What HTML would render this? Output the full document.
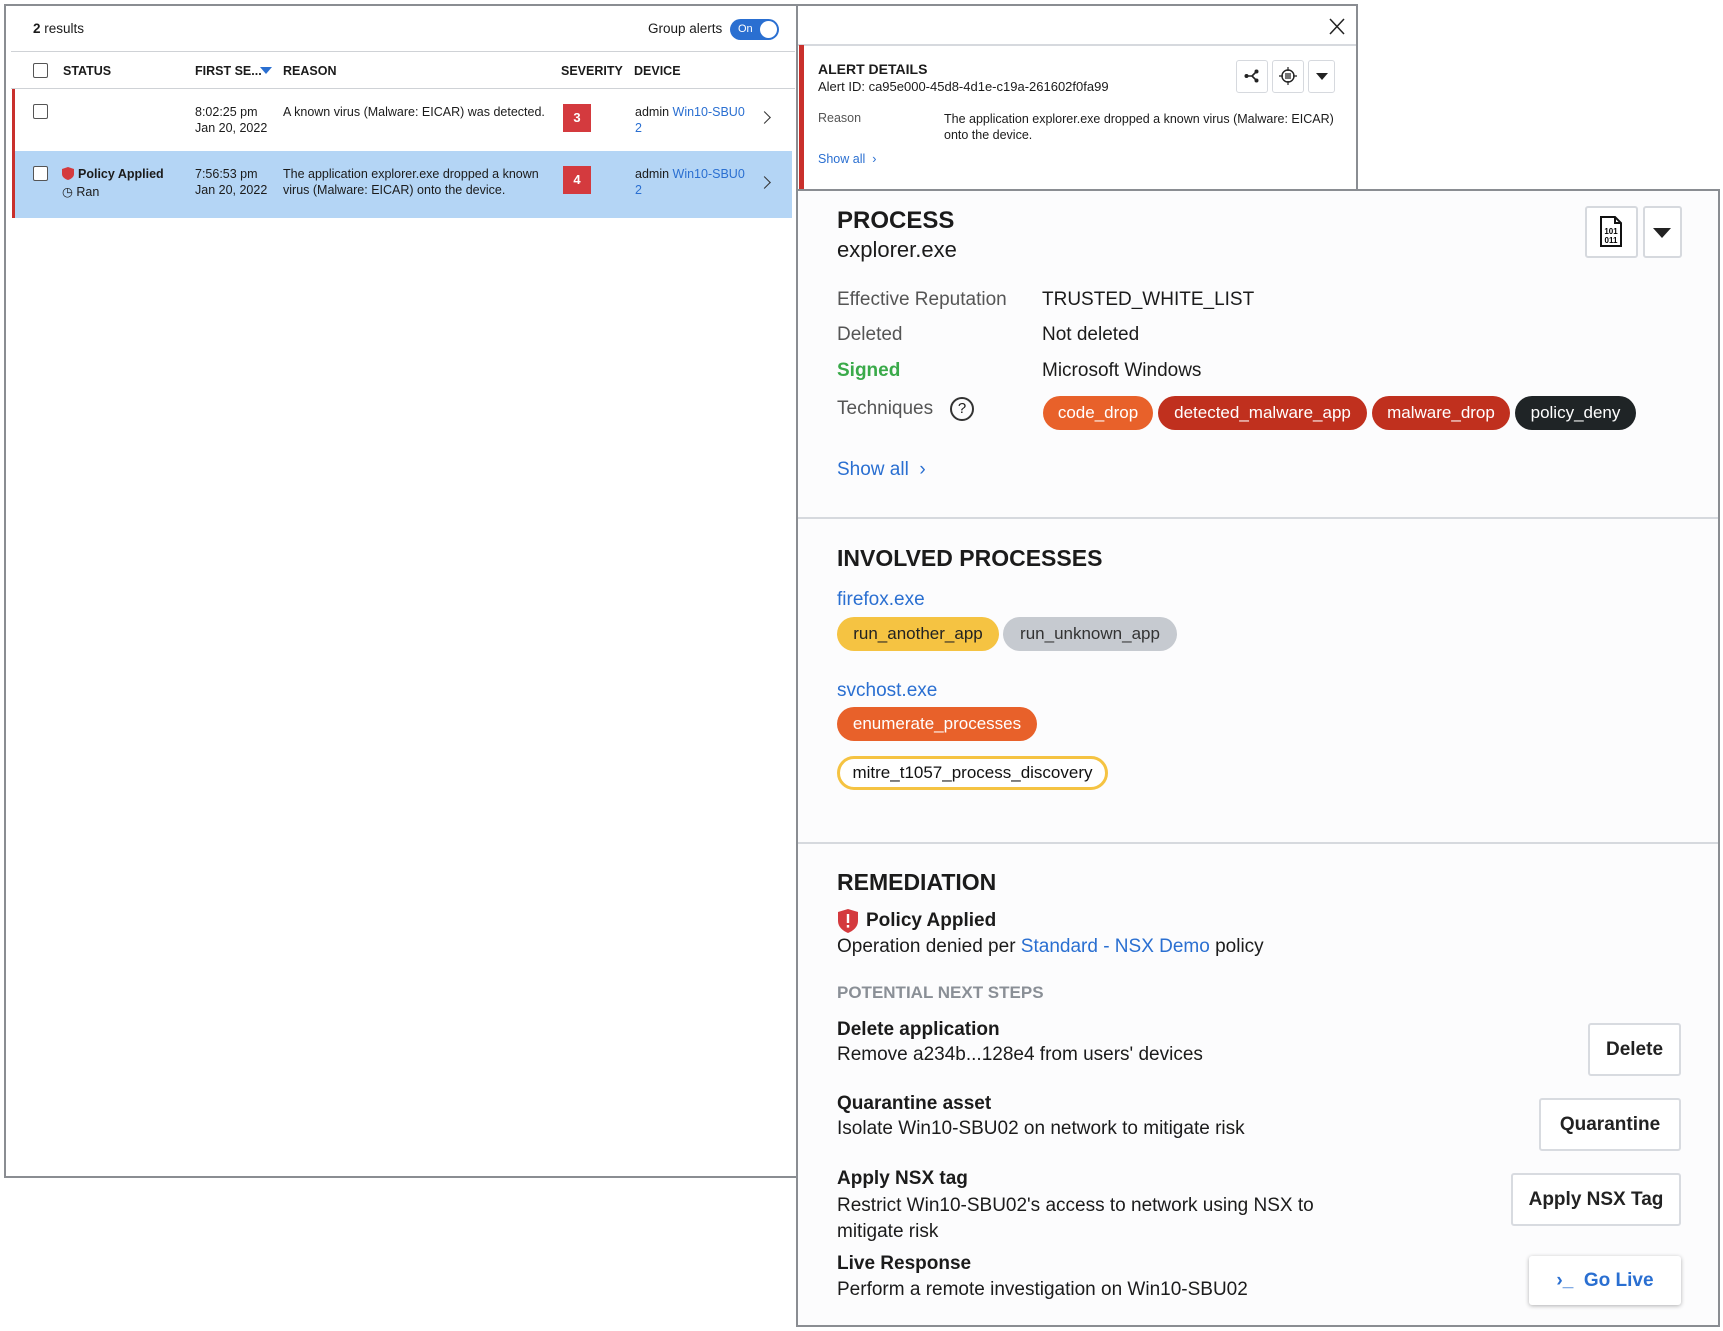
<!DOCTYPE html>
<html><head><meta charset="utf-8"><style>
*{margin:0;padding:0;box-sizing:border-box}
body{width:1723px;height:1331px;background:#fff;position:relative;overflow:hidden;font-family:"Liberation Sans",sans-serif;color:#1b1b1b}
.a{position:absolute;white-space:nowrap}
.s{font-size:12.5px;line-height:16px}
.b{font-weight:bold}
.bl{color:#2a6fd1}
.cb{position:absolute;width:15px;height:15px;border:1.5px solid #555;border-radius:2px;background:#fff}
.chip{position:absolute;height:34px;line-height:34px;border-radius:17px;font-size:17px;text-align:center;color:#fff}
.lab{font-size:19px;color:#555;line-height:24px}
.val{font-size:19px;color:#1b1b1b;line-height:24px}
.btn{position:absolute;border:2px solid #d8dbe0;border-radius:3px;background:#fff;font-size:19px;font-weight:bold;text-align:center;color:#222}
.ib{position:absolute;border:1.5px solid #d6d9de;border-radius:3px;background:#fff}
</style></head><body>
<!-- left panel -->
<div class="a" style="left:4px;top:4px;width:792px;height:1174px;border:2px solid #8a8d92;border-right:none;background:#fff"></div>
<div class="a s" style="left:33px;top:21px;font-size:13.5px"><b>2</b> results</div>
<div class="a s" style="left:648px;top:21px;font-size:13.5px">Group alerts</div>
<div class="a" style="left:730px;top:19px;width:49px;height:21px;border-radius:11px;background:#2a6fd1"></div>
<div class="a" style="left:738px;top:23px;color:#fff;font-size:11px">On</div>
<div class="a" style="left:760px;top:21px;width:17px;height:17px;border-radius:50%;background:#fff"></div>
<div class="a" style="left:11px;top:51px;width:784px;height:1px;background:#cfd2d6"></div>
<div class="cb" style="left:33px;top:63px"></div>
<div class="a s b" style="left:63px;top:63px">STATUS</div>
<div class="a s b" style="left:195px;top:63px">FIRST SE...</div>
<div class="a" style="left:260px;top:67px;width:0;height:0;border-left:6px solid transparent;border-right:6px solid transparent;border-top:7px solid #2a6fd1"></div>
<div class="a s b" style="left:283px;top:63px">REASON</div>
<div class="a s b" style="left:561px;top:63px">SEVERITY</div>
<div class="a s b" style="left:634px;top:63px">DEVICE</div>
<div class="a" style="left:11px;top:88px;width:784px;height:1px;background:#cfd2d6"></div>
<div class="a" style="left:12px;top:89px;width:3px;height:129px;background:#c9302c"></div>
<div class="a" style="left:15px;top:151px;width:777px;height:67px;background:#b4d5f5"></div>
<div class="cb" style="left:33px;top:104px"></div>
<div class="a s" style="left:195px;top:104px">8:02:25 pm<br>Jan 20, 2022</div>
<div class="a s" style="left:283px;top:104px">A known virus (Malware: EICAR) was detected.</div>
<div class="a" style="left:563px;top:104px;width:28px;height:28px;background:#d43a3e;color:#fff;font-size:13px;font-weight:bold;text-align:center;line-height:28px">3</div>
<div class="a s" style="left:635px;top:104px">admin <span class="bl">Win10-SBU0</span><br><span class="bl">2</span></div>
<div class="a" style="left:760px;top:113px;width:9px;height:9px;border-right:1.5px solid #333;border-top:1.5px solid #333;transform:rotate(45deg)"></div>
<div class="cb" style="left:33px;top:166px"></div>
<svg class="a" style="left:62px;top:167px" width="12" height="13" viewBox="0 0 12 13"><path d="M6 0L12 2V7C12 10 9 12 6 13C3 12 0 10 0 7V2Z" fill="#d43a3e"/></svg>
<div class="a s b" style="left:78px;top:166px">Policy Applied</div>
<div class="a s" style="left:62px;top:184px">&#9719; Ran</div>
<div class="a s" style="left:195px;top:166px">7:56:53 pm<br>Jan 20, 2022</div>
<div class="a s" style="left:283px;top:166px">The application explorer.exe dropped a known<br>virus (Malware: EICAR) onto the device.</div>
<div class="a" style="left:563px;top:166px;width:28px;height:28px;background:#d43a3e;color:#fff;font-size:13px;font-weight:bold;text-align:center;line-height:28px">4</div>
<div class="a s" style="left:635px;top:166px">admin <span class="bl">Win10-SBU0</span><br><span class="bl">2</span></div>
<div class="a" style="left:760px;top:178px;width:9px;height:9px;border-right:1.5px solid #333;border-top:1.5px solid #333;transform:rotate(45deg)"></div>

<!-- alert details -->
<div class="a" style="left:796px;top:4px;width:562px;height:186px;border:2px solid #8a8d92;border-bottom:none;background:#fff"></div>
<svg class="a" style="left:1329px;top:18px" width="16" height="17" viewBox="0 0 16 17"><path d="M1 1L15 16M15 1L1 16" stroke="#222" stroke-width="1.5"/></svg>
<div class="a" style="left:798px;top:44px;width:558px;height:1.5px;background:#d6d9de"></div>
<div class="a" style="left:799px;top:45px;width:5px;height:145px;background:#c9302c"></div>
<div class="a b" style="left:818px;top:61px;font-size:14px">ALERT DETAILS</div>
<div class="a" style="left:818px;top:79px;font-size:13px">Alert ID: ca95e000-45d8-4d1e-c19a-261602f0fa99</div>
<div class="ib" style="left:1236px;top:60px;width:32px;height:33px"></div>
<svg class="a" style="left:1244px;top:69px" width="16" height="14" viewBox="0 0 16 14"><path d="M2 7H8M8 7L12 3M8 7L12 11" stroke="#222" stroke-width="1.6" fill="none"/><circle cx="2.5" cy="7" r="2" fill="#222"/><circle cx="12.5" cy="2.5" r="2" fill="#222"/><circle cx="12.5" cy="11.5" r="2" fill="#222"/></svg>
<div class="ib" style="left:1272px;top:60px;width:32px;height:33px"></div>
<svg class="a" style="left:1279px;top:67px" width="18" height="18" viewBox="0 0 18 18"><circle cx="9" cy="9" r="6" fill="none" stroke="#222" stroke-width="1.4"/><path d="M9 0V4M9 14V18M0 9H4M14 9H18M6 7H12M6 9H12M6 11H12" stroke="#222" stroke-width="1.2"/></svg>
<div class="ib" style="left:1308px;top:60px;width:27px;height:33px"></div>
<div class="a" style="left:1316px;top:73px;border-left:6px solid transparent;border-right:6px solid transparent;border-top:7px solid #222"></div>
<div class="a" style="left:818px;top:111px;font-size:12.5px;color:#555">Reason</div>
<div class="a" style="left:944px;top:111px;font-size:12.5px;line-height:16px">The application explorer.exe dropped a known virus (Malware: EICAR)<br>onto the device.</div>
<div class="a bl" style="left:818px;top:152px;font-size:12.5px">Show all &nbsp;›</div>

<!-- process panel -->
<div class="a" style="left:796px;top:189px;width:924px;height:1138px;border:2px solid #8a8d92;background:#fcfcfd"></div>
<div class="a b" style="left:837px;top:207px;font-size:24px">PROCESS</div>
<div class="a" style="left:837px;top:237px;font-size:22px">explorer.exe</div>
<div class="ib" style="left:1585px;top:206px;width:53px;height:52px;border-width:2px"></div>
<svg class="a" style="left:1599px;top:215px" width="24" height="33" viewBox="0 0 24 33"><path d="M2 2H16L22 8V31H2Z" fill="#fff" stroke="#111" stroke-width="2"/><path d="M16 2V8H22" fill="none" stroke="#111" stroke-width="2"/><text x="12" y="19" font-size="8" font-weight="bold" text-anchor="middle" font-family="Liberation Sans">101</text><text x="12" y="28" font-size="8" font-weight="bold" text-anchor="middle" font-family="Liberation Sans">011</text></svg>
<div class="ib" style="left:1643px;top:206px;width:39px;height:52px;border-width:2px"></div>
<div class="a" style="left:1653px;top:228px;border-left:9px solid transparent;border-right:9px solid transparent;border-top:10px solid #222"></div>
<div class="a lab" style="left:837px;top:288px">Effective Reputation</div>
<div class="a val" style="left:1042px;top:288px">TRUSTED_WHITE_LIST</div>
<div class="a lab" style="left:837px;top:323px">Deleted</div>
<div class="a val" style="left:1042px;top:323px">Not deleted</div>
<div class="a lab b" style="left:837px;top:359px;color:#3aaa4a">Signed</div>
<div class="a val" style="left:1042px;top:359px">Microsoft Windows</div>
<div class="a lab" style="left:837px;top:397px">Techniques</div>
<div class="a" style="left:950px;top:397px;width:24px;height:24px;border:2px solid #333;border-radius:50%;text-align:center;font-size:15px;line-height:20px">?</div>
<div class="chip" style="left:1043px;top:396px;width:110px;background:#e8612a">code_drop</div>
<div class="chip" style="left:1158px;top:396px;width:209px;background:#c0301e">detected_malware_app</div>
<div class="chip" style="left:1372px;top:396px;width:138px;background:#c0301e">malware_drop</div>
<div class="chip" style="left:1515px;top:396px;width:121px;background:#1f2426">policy_deny</div>
<div class="a bl" style="left:837px;top:459px;font-size:19px">Show all &nbsp;›</div>
<div class="a" style="left:798px;top:517px;width:920px;height:2px;background:#d6d9de"></div>

<div class="a b" style="left:837px;top:545px;font-size:23px">INVOLVED PROCESSES</div>
<div class="a bl" style="left:837px;top:589px;font-size:19px">firefox.exe</div>
<div class="chip" style="left:837px;top:617px;width:162px;background:#f5c342;color:#222">run_another_app</div>
<div class="chip" style="left:1003px;top:617px;width:174px;background:#c6cad0;color:#333">run_unknown_app</div>
<div class="a bl" style="left:837px;top:680px;font-size:19px">svchost.exe</div>
<div class="chip" style="left:837px;top:707px;width:200px;background:#e8612a">enumerate_processes</div>
<div class="chip" style="left:837px;top:756px;width:271px;background:#fff;color:#111;border:3px solid #f5c342;line-height:28px">mitre_t1057_process_discovery</div>
<div class="a" style="left:798px;top:842px;width:920px;height:2px;background:#d6d9de"></div>

<div class="a b" style="left:837px;top:869px;font-size:23px">REMEDIATION</div>
<svg class="a" style="left:838px;top:909px" width="20" height="24" viewBox="0 0 20 24"><path d="M10 0L20 3V12C20 18 15 22 10 24C5 22 0 18 0 12V3Z" fill="#d43a3e"/><rect x="8.8" y="5" width="2.4" height="9" fill="#fff"/><rect x="8.8" y="16" width="2.4" height="2.6" fill="#fff"/></svg>
<div class="a b" style="left:866px;top:910px;font-size:19px">Policy Applied</div>
<div class="a" style="left:837px;top:936px;font-size:19px">Operation denied per <span class="bl">Standard - NSX Demo</span> policy</div>
<div class="a b" style="left:837px;top:983px;font-size:17px;color:#8a8f96">POTENTIAL NEXT STEPS</div>
<div class="a b" style="left:837px;top:1019px;font-size:19px">Delete application</div>
<div class="a" style="left:837px;top:1044px;font-size:19px">Remove a234b...128e4 from users' devices</div>
<div class="btn" style="left:1588px;top:1023px;width:93px;height:53px;line-height:49px">Delete</div>
<div class="a b" style="left:837px;top:1093px;font-size:19px">Quarantine asset</div>
<div class="a" style="left:837px;top:1118px;font-size:19px">Isolate Win10-SBU02 on network to mitigate risk</div>
<div class="btn" style="left:1539px;top:1098px;width:142px;height:53px;line-height:49px">Quarantine</div>
<div class="a b" style="left:837px;top:1168px;font-size:19px">Apply NSX tag</div>
<div class="a" style="left:837px;top:1193px;font-size:19px;line-height:26px">Restrict Win10-SBU02's access to network using NSX to<br>mitigate risk</div>
<div class="btn" style="left:1511px;top:1173px;width:170px;height:53px;line-height:49px">Apply NSX Tag</div>
<div class="a b" style="left:837px;top:1253px;font-size:19px">Live Response</div>
<div class="a" style="left:837px;top:1279px;font-size:19px">Perform a remote investigation on Win10-SBU02</div>
<div class="a" style="left:1529px;top:1256px;width:152px;height:49px;background:#fff;border-radius:3px;box-shadow:0 1px 4px rgba(0,0,0,.3);line-height:49px;text-align:center;font-size:19px;font-weight:bold;color:#2a6fd1">›_ &nbsp;Go Live</div>
</body></html>
